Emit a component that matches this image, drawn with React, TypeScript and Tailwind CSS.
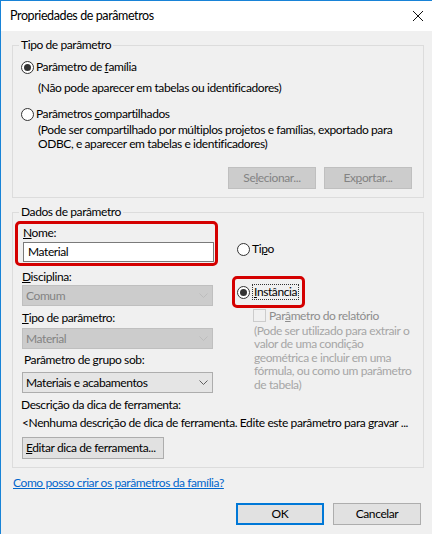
import React from "react";

const F = { fontFamily: 'Lato, "Segoe UI", sans-serif' } as const;

function Radio({ checked }: { checked?: boolean }) {
  return (
    <span className="flex h-[13px] w-[13px] shrink-0 items-center justify-center rounded-full border border-[#333333] bg-white">
      {checked && <span className="h-[7px] w-[7px] rounded-full bg-[#333333]" />}
    </span>
  );
}

function Chevron({ color }: { color: string }) {
  return (
    <svg width="9" height="6" viewBox="0 0 9 6" className="shrink-0">
      <path d="M0.5 0.5 L4.5 4.5 L8.5 0.5" fill="none" stroke={color} strokeWidth="1" />
    </svg>
  );
}

function Select({ value, disabled }: { value: string; disabled?: boolean }) {
  return (
    <div
      className={
        disabled
          ? "flex h-[21px] w-[191px] items-center justify-between border border-[#bfbfbf] bg-[#cccccc] pl-[3px] pr-[4px] text-[#838383]"
          : "flex h-[21px] w-[191px] items-center justify-between border border-[#adadad] bg-[#e5e5e5] pl-[3px] pr-[4px] text-black"
      }
    >
      <span>{value}</span>
      <Chevron color={disabled ? "#bcbcbc" : "#606060"} />
    </div>
  );
}

export default function App() {
  return (
    <div
      style={F}
      className="flex h-[534px] w-[432px] flex-col overflow-hidden whitespace-nowrap border-l border-t border-[#1883d7] bg-[#f0f0f0] text-[12px] leading-[16px] tracking-[-0.4px] text-black"
    >
      {/* Title bar */}
      <div className="flex h-[30px] shrink-0 items-center justify-between bg-white pl-[9px] pr-[8px]">
        <span className="text-[12.5px]">Propriedades de parâmetros</span>
        <svg width="12" height="12" viewBox="0 0 12 12">
          <path d="M1 1 L11 11 M11 1 L1 11" stroke="#111" strokeWidth="1" />
        </svg>
      </div>

      <div className="flex flex-col px-[11px]">
        {/* Group 1 */}
        <fieldset className="mt-[6px] h-[161px] w-[412px] border border-[#dcdcdc] p-0">
          <legend className="ml-[6px] px-[2px] leading-[16px]">Tipo de parâmetro</legend>
          <div className="flex flex-col pl-[8px]">
            <div className="mt-[6px] flex items-center gap-[2px]">
              <Radio checked />
              <span>
                Parâmetro de <u>f</u>amília
              </span>
            </div>
            <div className="mt-[5px] pl-[17px]">(Não pode aparecer em tabelas ou identificadores)</div>
            <div className="mt-[10px] flex items-center gap-[2px]">
              <Radio />
              <span>
                Parâmetros <u>c</u>ompartilhados
              </span>
            </div>
            <div className="mt-[1px] pl-[17px] leading-[14px]">
              (Pode ser compartilhado por múltiplos projetos e famílias, exportado para
              <br />
              ODBC, e aparecer em tabelas e identificadores)
            </div>
            <div className="mt-[16px] flex justify-end gap-[8px] pr-[11px]">
              <div className="flex h-[22px] w-[88px] items-center justify-center border border-[#bfbfbf] bg-[#cccccc] text-[#838383]">
                Se<u>l</u>ecionar...
              </div>
              <div className="flex h-[22px] w-[88px] items-center justify-center border border-[#bfbfbf] bg-[#cccccc] text-[#838383]">
                Ex<u>p</u>ortar...
              </div>
            </div>
          </div>
        </fieldset>

        {/* Group 2 */}
        <fieldset className="mt-[6px] h-[264px] w-[412px] border border-[#dcdcdc] p-0">
          <legend className="ml-[6px] px-[2px] leading-[16px]">Dados de parâmetro</legend>
          <div className="flex">
            {/* Left column */}
            <div className="flex w-[219px] flex-col">
              <div className="ml-[2px] mt-[1px] flex h-[45px] w-[203px] flex-col rounded-[5px] border-[3px] border-[#d40000] pl-[5px] pt-[1px]">
                <span className="leading-[15px]">
                  <u>N</u>ome:
                </span>
                <div className="mt-[2px] flex h-[20px] w-[191px] items-center border border-[#7a7a7a] bg-white pl-[4px]">
                  Material
                </div>
              </div>
              <div className="ml-[9px] mt-[3px]">
                <u>D</u>isciplina:
              </div>
              <div className="ml-[9px] mt-0">
                <Select value="Comum" disabled />
              </div>
              <div className="ml-[9px] mt-[4px]">
                <u>T</u>ipo de parâmetro:
              </div>
              <div className="ml-[9px] mt-[2px]">
                <Select value="Material" disabled />
              </div>
              <div className="ml-[11px] mt-[3px]">
                Parâmetro de <u>g</u>rupo sob:
              </div>
              <div className="ml-[9px] mt-[4px]">
                <Select value="Materiais e acabamentos" />
              </div>
            </div>
            {/* Right column */}
            <div className="flex flex-1 flex-col">
              <div className="ml-[5px] mt-[21px] flex items-center gap-[2px]">
                <Radio />
                <span>
                  Ti<u>p</u>o
                </span>
              </div>
              <div className="mt-[19px] flex h-[32px] w-[73px] items-center rounded-[5px] border-[3px] border-[#d40000] pl-[2px]">
                <Radio checked />
                <span className="ml-[2px] border border-dotted border-[#333] px-[1px] leading-[14px]">
                  <u>I</u>nstância
                </span>
              </div>
              <div className="ml-[21px] mt-[1px] flex items-center gap-[3px] leading-[13px] text-[#8d8d8d]">
                <span className="h-[13px] w-[13px] border border-[#cccccc] bg-[#f0f0f0]" />
                <span>
                  Par<u>â</u>metro do relatório
                </span>
              </div>
              <div className="ml-[22px] mt-[2px] leading-[13.4px] text-[#a6a6a6]">
                (Pode ser utilizado para extrair o
                <br />
                valor de uma condição
                <br />
                geométrica e incluir em uma
                <br />
                fórmula, ou como um parâmetro
                <br />
                de tabela)
              </div>
            </div>
          </div>
          <div className="ml-[8px] mt-[4px]">Descrição da dica de ferramenta:</div>
          <div className="ml-[9px] mt-[2px]">
            &lt;Nenhuma descrição de dica de ferramenta. Edite este parâmetro para gravar ...
          </div>
          <div className="ml-[9px] mt-[6px] flex h-[22px] w-[142px] items-center border border-[#adadad] bg-[#e1e1e1] pl-[3px]">
            <span>
              <u>E</u>ditar dica de ferramenta...
            </span>
          </div>
        </fieldset>

        <a className="ml-[1px] mt-[7px] text-[#0066cc] underline">Como posso criar os parâmetros da família?</a>

        <div className="mt-[12px] flex justify-end gap-[9px]">
          <div className="flex h-[22px] w-[88px] items-center justify-center border-2 border-[#0078d7] bg-[#e1e1e1]">
            OK
          </div>
          <div className="flex h-[22px] w-[88px] items-center justify-center border border-[#adadad] bg-[#e1e1e1]">
            Cancelar
          </div>
        </div>
      </div>
    </div>
  );
}
